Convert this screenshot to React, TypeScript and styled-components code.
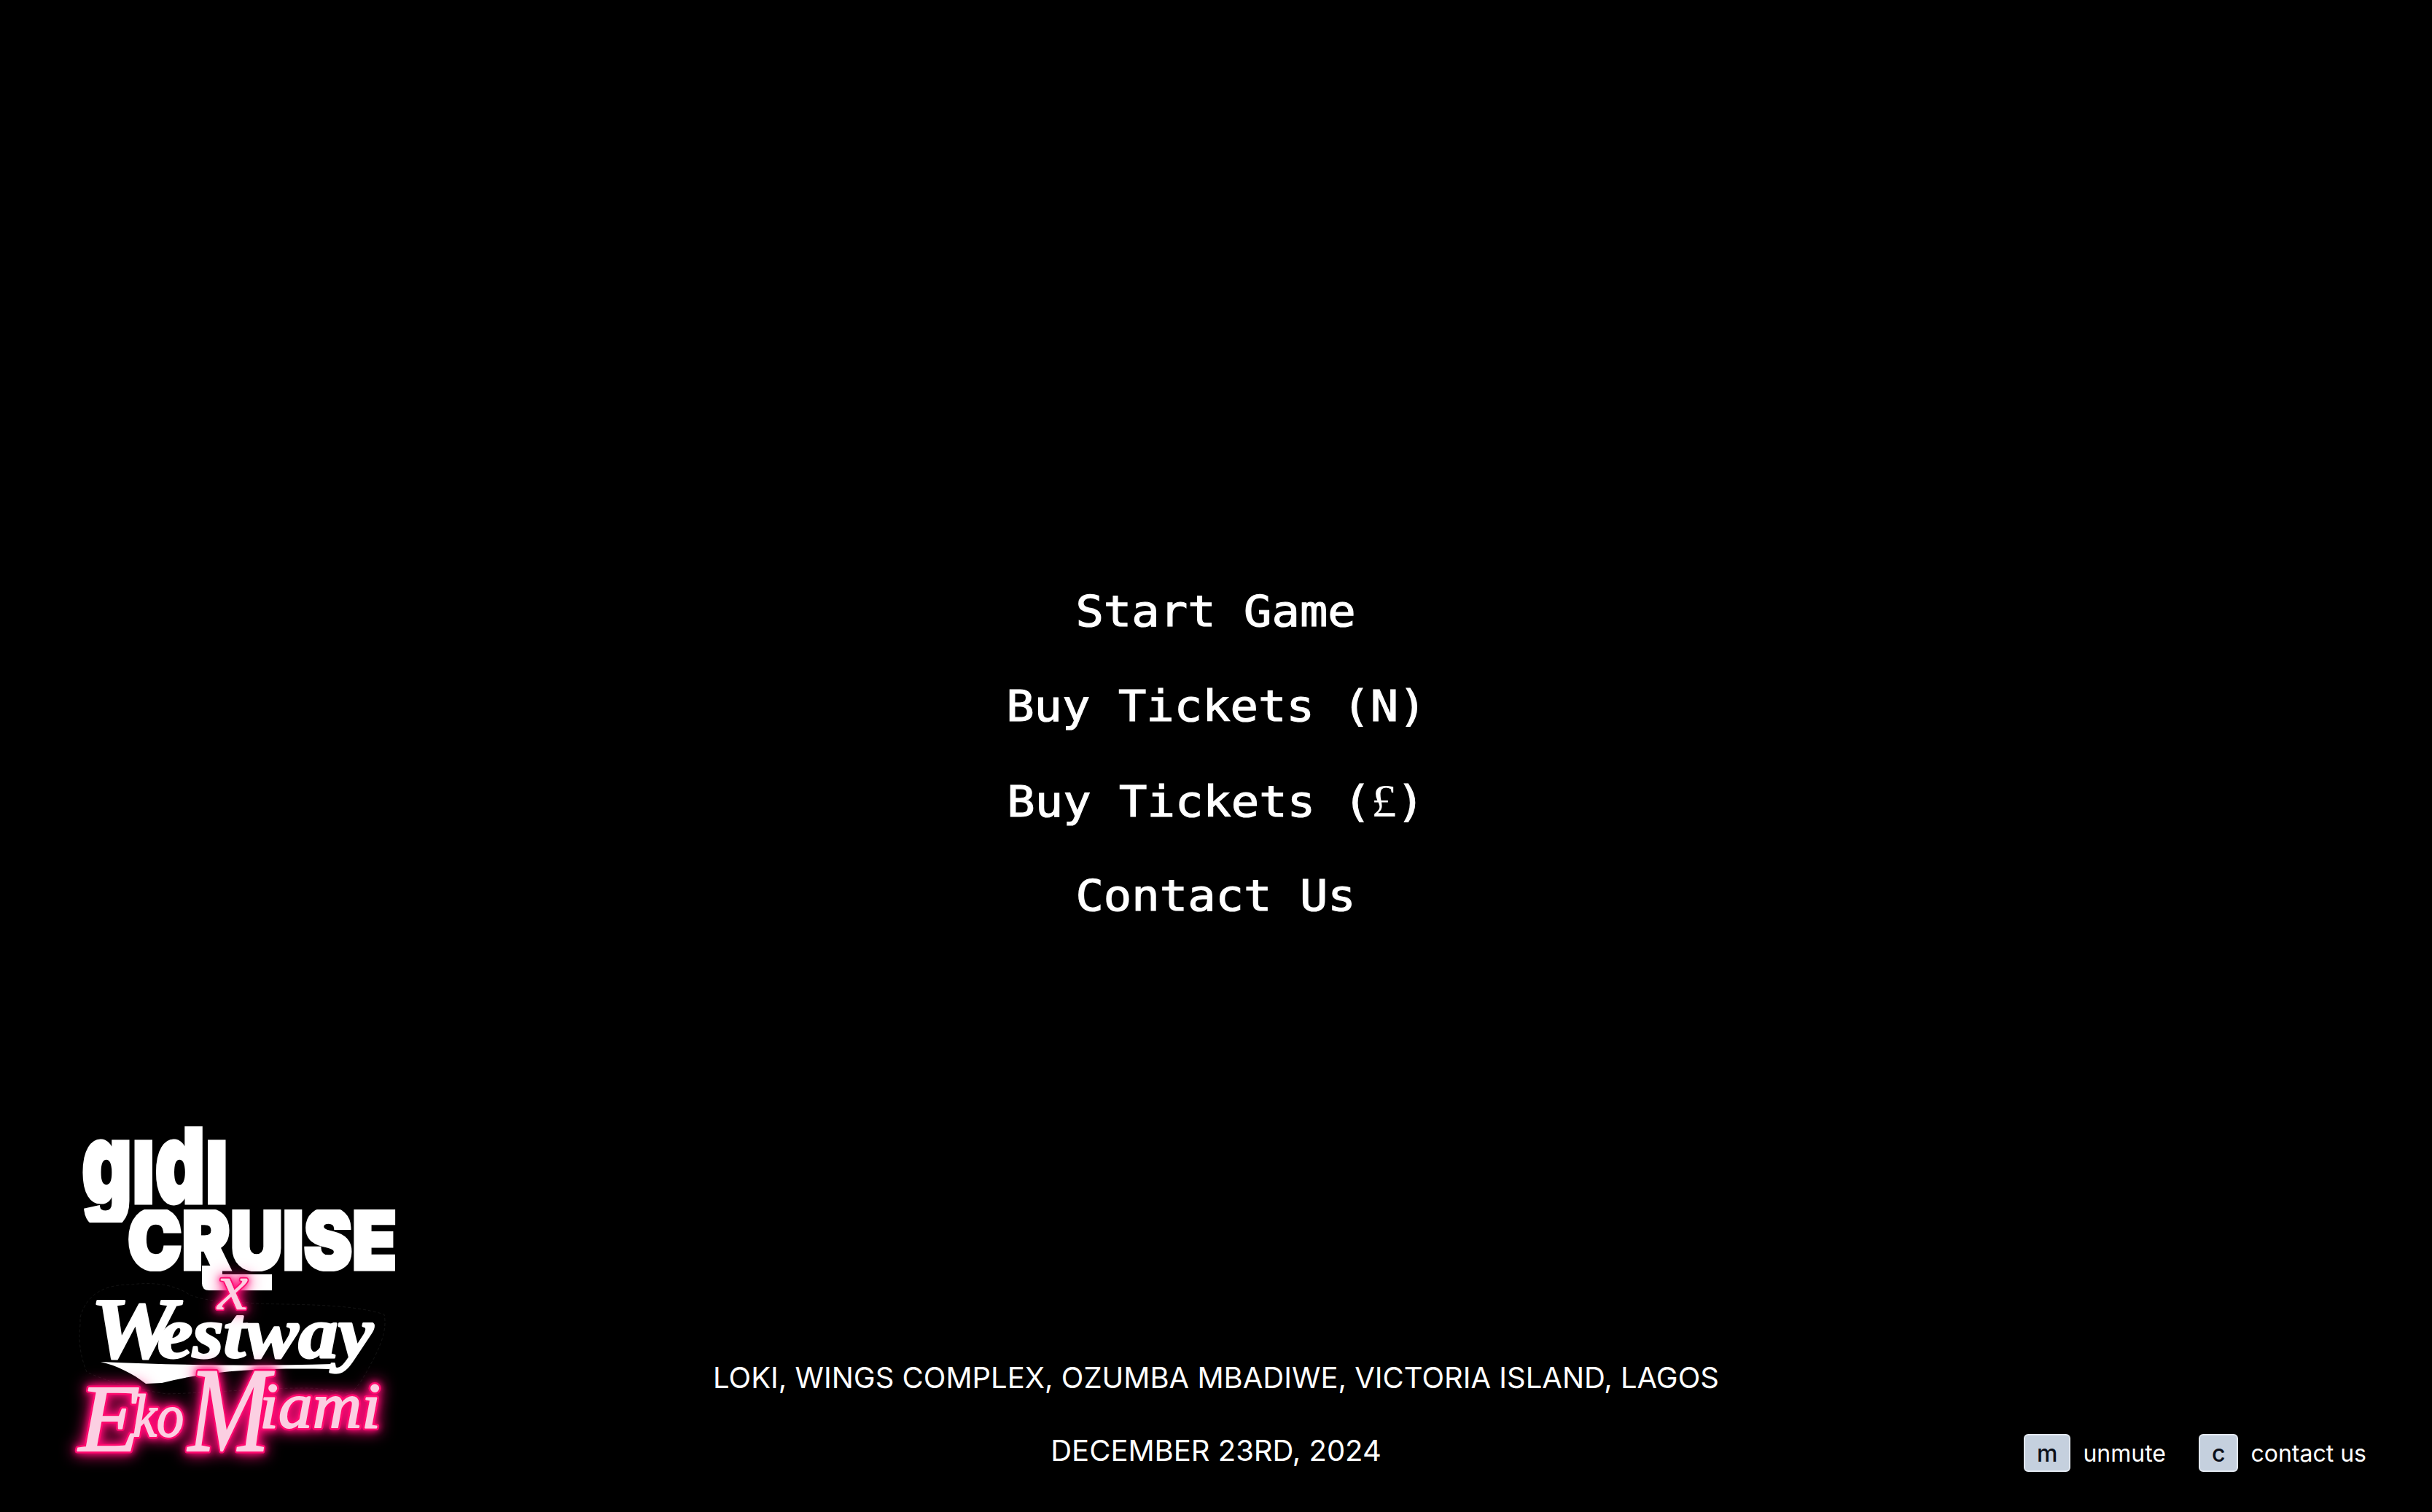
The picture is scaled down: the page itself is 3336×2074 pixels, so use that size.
import styled, { createGlobalStyle } from 'styled-components';

const GlobalStyle = createGlobalStyle`
  html, body {
    margin: 0;
    padding: 0;
    background: #000;
  }
`;

const Page = styled.main`
  height: 100vh;
  background: #000;
  color: #fff;
  font-family: Inter, 'Noto Sans', sans-serif;
  display: grid;
  grid-template-rows: 1fr auto;
  overflow: hidden;
`;

const Menu = styled.nav`
  display: flex;
  flex-direction: column;
  align-items: center;
  row-gap: 60px;
  padding-top: 804px;
`;

const MenuItem = styled.a`
  display: block;
  height: 70px;
  line-height: 70px;
  font-family: 'DejaVu Sans Mono', 'Liberation Mono', monospace;
  font-size: 59px;
  color: #fff;
  -webkit-text-stroke: 1.2px #fff;
  white-space: pre;
  transform: scaleX(1.082);
  cursor: pointer;
`;

const Pound = styled.span`
  font-family: 'Liberation Serif', serif;
  font-size: 64px;
  -webkit-text-stroke: 0;
`;

const Footer = styled.footer`
  display: grid;
  grid-template-columns: 1fr auto 1fr;
  align-items: end;
  padding-bottom: 34px;
`;

const LogoSvg = styled.svg`
  display: block;
  width: 520px;
  height: 540px;
  margin-left: 60px;
`;

const BlockText = styled.text`
  font-family: Inter, 'Liberation Sans', sans-serif;
  font-weight: 900;
  fill: #fff;
  stroke: #fff;
  stroke-linejoin: miter;
`;

const ScriptText = styled.text`
  font-family: 'Liberation Serif', serif;
  font-style: italic;
  font-weight: 700;
  fill: #fff;
  stroke: #fff;
  stroke-width: 3px;
  stroke-linejoin: round;
`;

const StickerEdge = styled.path`
  fill: none;
  stroke: #141414;
  stroke-width: 1px;
  stroke-dasharray: 4 3;
`;

const NeonGroup = styled.g`
  filter: drop-shadow(0 0 4px #ff0a78) drop-shadow(0 0 10px #ff0a78);
`;

const NeonHalo = styled.text<{ $thin?: boolean }>`
  font-family: 'Liberation Serif', serif;
  font-style: italic;
  fill: #ff0a6e;
  stroke: #ff0a6e;
  stroke-width: ${(p) => (p.$thin ? 4 : 7)}px;
  stroke-linejoin: round;
`;

const NeonCore = styled(NeonHalo)`
  fill: #fbcfe2;
  stroke: #fbcfe2;
  stroke-width: ${(p) => (p.$thin ? 0.5 : 2)}px;
`;

const Venue = styled.div`
  display: flex;
  flex-direction: column;
  align-items: center;
  row-gap: 52px;
  padding-bottom: 26px;
  font-size: 40px;
  line-height: 48px;
  white-space: nowrap;
`;

const Shortcuts = styled.div`
  display: flex;
  justify-content: flex-end;
  align-items: center;
  column-gap: 45px;
  padding: 0 90px 21px 0;
`;

const Shortcut = styled.div`
  display: flex;
  align-items: center;
  column-gap: 17px;
  font-size: 32px;
`;

const Key = styled.kbd`
  display: block;
  box-sizing: border-box;
  height: 52px;
  line-height: 50px;
  padding: 0 16px;
  border: 2px solid #e2e8f0;
  border-radius: 6px;
  background: #c5d0de;
  color: #0b0f19;
  font-family: Inter, sans-serif;
  font-size: 32px;
  font-weight: 500;
`;

const neonParts = [
  { text: 'x', x: 238, y: 296, size: 90, width: 42, thin: true },
  { text: 'E', x: 48, y: 490, size: 132, width: 84 },
  { text: 'ko', x: 122, y: 470, size: 82, width: 70 },
  { text: 'M', x: 198, y: 490, size: 165, width: 112 },
  { text: 'iami', x: 296, y: 458, size: 88, width: 166 },
];

const Logo = () => (
  <LogoSvg viewBox="0 0 520 540" aria-label="Gidi Cruise x Westway Eko Miami">
    <defs>
      <clipPath id="gidi-clip">
        <rect x="50" y="45" width="210" height="132" />
      </clipPath>
      <clipPath id="cruise-clip">
        <rect x="112" y="159" width="375" height="85" />
      </clipPath>
    </defs>
    <StickerEdge d="M50 307C60 270 90 262 120 262c30-4 60 0 80 14 30 12 60 8 90 12 60 2 130 0 177 15 4 20-4 40-14 60-10 18-20 40-34 49-20-4-40-8-60-8-60 0-120 6-190 8-40-6-80-16-110-30-8-20-12-40-9-65z" />
    <g clipPath="url(#gidi-clip)">
      <BlockText x="52" y="150" fontSize="154" strokeWidth="5" textLength="201" lengthAdjust="spacingAndGlyphs">
        gıdı
      </BlockText>
    </g>
    <g clipPath="url(#cruise-clip)">
      <BlockText x="115" y="241" fontSize="112" strokeWidth="5" textLength="369" lengthAdjust="spacingAndGlyphs">
        CRUISE
      </BlockText>
    </g>
    <path d="M217 236h28v12h68v22h-86q-10 0-10-10z" fill="#fff" />
    <ScriptText x="64" y="362" fontSize="118" textLength="118" lengthAdjust="spacingAndGlyphs">
      W
    </ScriptText>
    <ScriptText x="156" y="362" fontSize="100" textLength="296" lengthAdjust="spacingAndGlyphs">
      estway
    </ScriptText>
    <path
      d="M78 368c110 5 220 6 318 3l-4 7c-60-1-150-2-230 19l-22 1c-18-14-40-25-62-30z"
      fill="#fff"
    />
    <NeonGroup>
      {neonParts.map((p) => (
        <NeonHalo key={p.text} $thin={p.thin} x={p.x} y={p.y} fontSize={p.size} textLength={p.width} lengthAdjust="spacingAndGlyphs">
          {p.text}
        </NeonHalo>
      ))}
      {neonParts.map((p) => (
        <NeonCore key={p.text} $thin={p.thin} x={p.x} y={p.y} fontSize={p.size} textLength={p.width} lengthAdjust="spacingAndGlyphs">
          {p.text}
        </NeonCore>
      ))}
    </NeonGroup>
  </LogoSvg>
);

export default function App() {
  return (
    <Page>
      <GlobalStyle />
      <Menu>
        <MenuItem>Start Game</MenuItem>
        <MenuItem>Buy Tickets (N)</MenuItem>
        <MenuItem>
          Buy Tickets (<Pound>£</Pound>)
        </MenuItem>
        <MenuItem>Contact Us</MenuItem>
      </Menu>
      <Footer>
        <Logo />
        <Venue>
          <span>LOKI, WINGS COMPLEX, OZUMBA MBADIWE, VICTORIA ISLAND, LAGOS</span>
          <span>DECEMBER 23RD, 2024</span>
        </Venue>
        <Shortcuts>
          <Shortcut>
            <Key>m</Key>
            unmute
          </Shortcut>
          <Shortcut>
            <Key>c</Key>
            contact us
          </Shortcut>
        </Shortcuts>
      </Footer>
    </Page>
  );
}
